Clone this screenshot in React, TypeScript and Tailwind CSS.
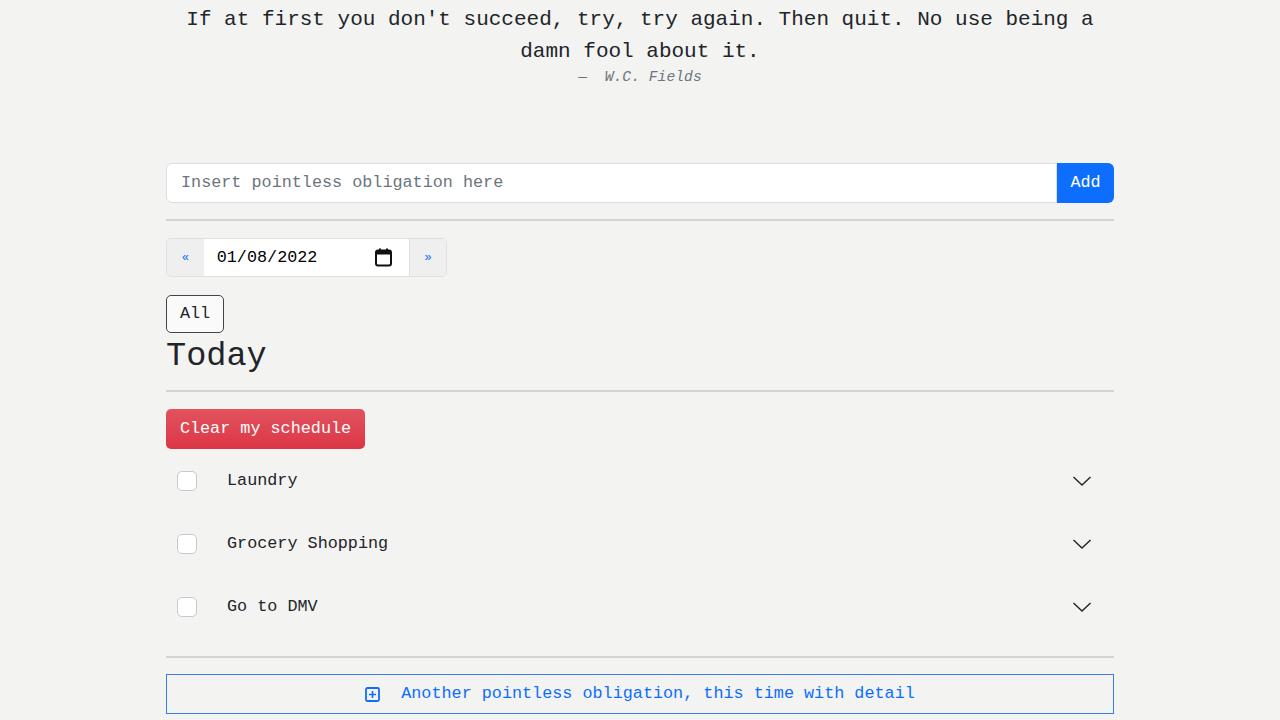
import React from "react";

const mono = { fontFamily: '"Liberation Mono", "Courier New", monospace' };

const Chevron = () => (
  <svg width="20" height="12" viewBox="0 0 20 12" fill="none" stroke="#212529" strokeWidth="1.4">
    <path d="M1.5 2 L10 10 L18.5 2" />
  </svg>
);

const PlusSquare = () => (
  <svg width="15" height="15" viewBox="0 0 15 15" fill="none" stroke="currentColor">
    <rect x="1" y="1" width="13" height="13" rx="1.5" strokeWidth="1.8" />
    <path d="M7.5 4 V11 M4 7.5 H11" strokeWidth="1.6" />
  </svg>
);

const tasks = ["Laundry", "Grocery Shopping", "Go to DMV"];

const TaskRow = ({ name }: { name: string }) => (
  <div className="h-[63px] flex flex-row items-center">
    <div className="ml-[11px] w-[20px] h-[20px] rounded-[5px] border border-[#c9c9c9] bg-white" />
    <div className="ml-[30px] flex-1 text-[16.8px] text-[#212529]">{name}</div>
    <div className="mr-[22px] flex items-center">
      <Chevron />
    </div>
  </div>
);

export default function App() {
  return (
    <div className="min-h-[720px] bg-[#f3f3f2] text-[#212529]" style={mono}>
      <div className="w-[948px] mx-auto pt-[4px]">
        <div className="text-center">
          <div className="text-[21px] leading-[31.5px] px-[18px]">
            If at first you don't succeed, try, try again. Then quit. No use being a damn fool about it.
          </div>
          <div className="text-[14.7px] leading-[21px] text-[#6c757d] italic">
            —&nbsp;&nbsp;W.C. Fields
          </div>
        </div>

        <div className="mt-[75px] flex flex-row h-[40px]">
          <div className="flex-1 bg-white border border-[#dedede] rounded-l-[6px] flex items-center pl-[14px] text-[16.8px] text-[#6c757d]">
            Insert pointless obligation here
          </div>
          <div className="w-[57px] bg-[#0d6efd] rounded-r-[6px] flex items-center justify-center text-white text-[16.8px]">
            Add
          </div>
        </div>

        <div className="mt-[16px] border-t-2 border-[#d3d3d3]" />

        <div className="mt-[17px] flex flex-row h-[39px] w-[281px] border border-[#e0e0e0] rounded-[5px] overflow-hidden">
          <div className="w-[37px] bg-[#efefef] flex items-center justify-center text-[#0d6efd] text-[12px]">«</div>
          <div className="w-[207px] bg-white flex items-center justify-between pl-[13px] pr-[17px] text-[16.8px] text-black">
            <span>01/08/2022</span>
            <svg width="17" height="19" viewBox="0 0 17 19" fill="none">
              <rect x="1" y="2.5" width="15" height="15" rx="2" stroke="#111" strokeWidth="2" />
              <rect x="1" y="2.5" width="15" height="4" fill="#111" />
              <rect x="4" y="0.5" width="2" height="3" fill="#111" />
              <rect x="11" y="0.5" width="2" height="3" fill="#111" />
            </svg>
          </div>
          <div className="w-[37px] bg-[#efefef] border-l border-[#e0e0e0] flex items-center justify-center text-[#0d6efd] text-[12px]">»</div>
        </div>

        <div className="mt-[18px] w-[58px] h-[38px] border border-[#444] rounded-[5px] bg-[#fafafa] flex items-center justify-center text-[16.8px]">
          All
        </div>

        <div className="mt-[3px] text-[33.6px] leading-[40px]">Today</div>

        <div className="mt-[14px] border-t-2 border-[#d3d3d3]" />

        <div className="mt-[17px] w-[199px] h-[40px] rounded-[5px] bg-linear-to-b from-[#e2525f] to-[#dc3545] text-white text-[16.8px] flex items-center justify-center">
          Clear my schedule
        </div>

        <div className="flex flex-col">
          {tasks.map(t => (
            <TaskRow key={t} name={t} />
          ))}
        </div>

        <div className="mt-[18px] border-t-2 border-[#d3d3d3]" />

        <div className="mt-[16px] h-[40px] border border-[#3a7ee6] flex flex-row items-center justify-center text-[#0d6efd] text-[16.8px]">
          <PlusSquare />
          <span className="ml-[21px]">Another pointless obligation, this time with detail</span>
        </div>
      </div>
    </div>
  );
}
